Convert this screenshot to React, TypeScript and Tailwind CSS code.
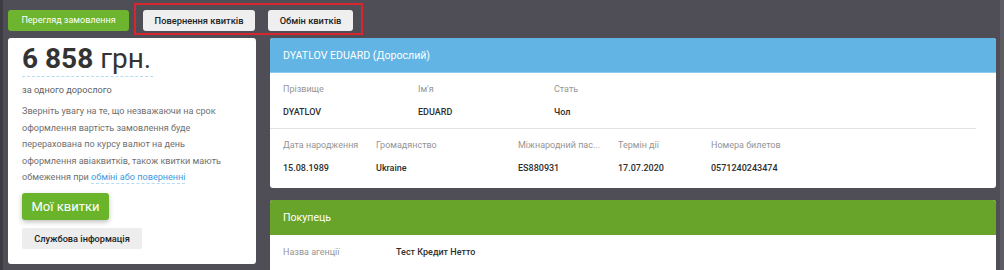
import React from 'react';

const font = "font-['Roboto','Liberation_Sans',sans-serif]";

const Field: React.FC<{ label: string; value: string; w: string }> = ({ label, value, w }) => (
  <div className={`${w} shrink-0`}>
    <div className="text-[9px] text-[#959595] leading-[12px] truncate pr-2">{label}</div>
    <div className="text-[9px] text-[#2e2e2e] font-medium leading-[12px] mt-[11px]">{value}</div>
  </div>
);

export default function App() {
  return (
    <div className={`${font} flex h-[270px] w-[1004px] overflow-hidden bg-[#4f4e57]`}>
      <div className="w-[3px] bg-[#3d3c43]" />
      <div className="flex-1 pl-[5px]">
        {/* top buttons */}
        <div className="flex items-start pt-[3px] h-[35px]">
          <button className="mt-[7px] h-[21px] w-[121px] rounded-[3px] bg-[#6db42f] text-white text-[9px] leading-[21px]">
            Перегляд замовлення
          </button>
          <div className="ml-[5px] flex gap-[13px] border-2 border-[#d8262f] px-[7px] pt-[5px] pb-[2px] w-[229px] h-[32px]">
            <button className="h-[21px] w-[112px] rounded-[3px] bg-[#efefef] text-[#222] text-[9.3px] font-medium leading-[21px]">
              Повернення квитків
            </button>
            <button className="h-[21px] w-[85px] rounded-[3px] bg-[#efefef] text-[#222] text-[9.3px] font-medium leading-[21px]">
              Обмін квитків
            </button>
          </div>
        </div>

        <div className="flex gap-[14px] mt-[3px]">
          {/* left card */}
          <div className="w-[248px] h-[226px] shrink-0 rounded-[3px] bg-white px-[14px] pt-[6px]">
            <div className="inline-block border-b border-dashed border-[#b5daf3] pb-[2px] text-[28px] leading-[30px] text-[#333] pr-[2px]">
              <span className="font-bold">6 858</span> грн.
            </div>
            <div className="mt-[7px] text-[9.2px] leading-[12px] text-[#5f5f5f]">за одного дорослого</div>
            <p className="mt-[7px] w-[208px] text-[9.1px] leading-[16.5px] text-[#6f6f6f]">
              Зверніть увагу на те, що незважаючи на срок оформлення вартість замовлення буде перерахована по курсу валют на день оформлення авіаквитків, також квитки мають обмеження при{' '}
              <span className="text-[#3d9be2] underline decoration-dashed decoration-[#b5daf3] underline-offset-[3px]">обміні або поверненні</span>
            </p>
            <button className="block mt-[7px] h-[27px] w-[87px] rounded-[3px] bg-[#6ab42c] text-white text-[13px] leading-[27px] shadow-[0_2px_5px_rgba(0,0,0,0.25)]">
              Мої квитки
            </button>
            <button className="block mt-[8px] h-[21px] w-[120px] rounded-[2px] bg-[#ededed] text-[#222] text-[9.2px] font-medium leading-[21px]">
              Службова інформація
            </button>
          </div>

          {/* right column */}
          <div className="w-[726px] shrink-0 flex flex-col gap-[12px]">
            <div className="h-[150px] rounded-[3px] bg-white overflow-hidden">
              <div className="h-[35px] bg-[#62b4e4] border-b border-[#8ccaee] px-[13px] text-white text-[10.6px] leading-[35px]">
                DYATLOV EDUARD (Дорослий)
              </div>
              <div className="flex px-[13px] pt-[10px] h-[55px]">
                <Field w="w-[135px]" label="Прізвище" value="DYATLOV" />
                <Field w="w-[136px]" label="Ім'я" value="EDUARD" />
                <Field w="w-[135px]" label="Стать" value="Чол" />
              </div>
              <div className="h-px bg-[#e2e2e2] mr-[20px]" />
              <div className="flex px-[13px] pt-[10px]">
                <Field w="w-[93px]" label="Дата народження" value="15.08.1989" />
                <Field w="w-[142px]" label="Громадянство" value="Ukraine" />
                <Field w="w-[100px]" label="Міжнародний пас..." value="ES880931" />
                <Field w="w-[93px]" label="Термін дії" value="17.07.2020" />
                <Field w="w-[120px]" label="Номера билетов" value="0571240243474" />
              </div>
            </div>

            <div className="h-[80px] rounded-t-[3px] bg-white overflow-hidden">
              <div className="h-[35px] bg-[#68a42a] px-[13px] text-white text-[10.6px] leading-[35px]">Покупець</div>
              <div className="flex px-[13px] pt-[11px] text-[9px] leading-[12px]">
                <div className="w-[113px] text-[#959595]">Назва агенції</div>
                <div className="text-[#2e2e2e] font-medium">Тест Кредит Нетто</div>
              </div>
            </div>
          </div>
        </div>
      </div>
      <div className="w-[4px]" />
      <div className="w-[4px] bg-[#5d5c65]" />
    </div>
  );
}
